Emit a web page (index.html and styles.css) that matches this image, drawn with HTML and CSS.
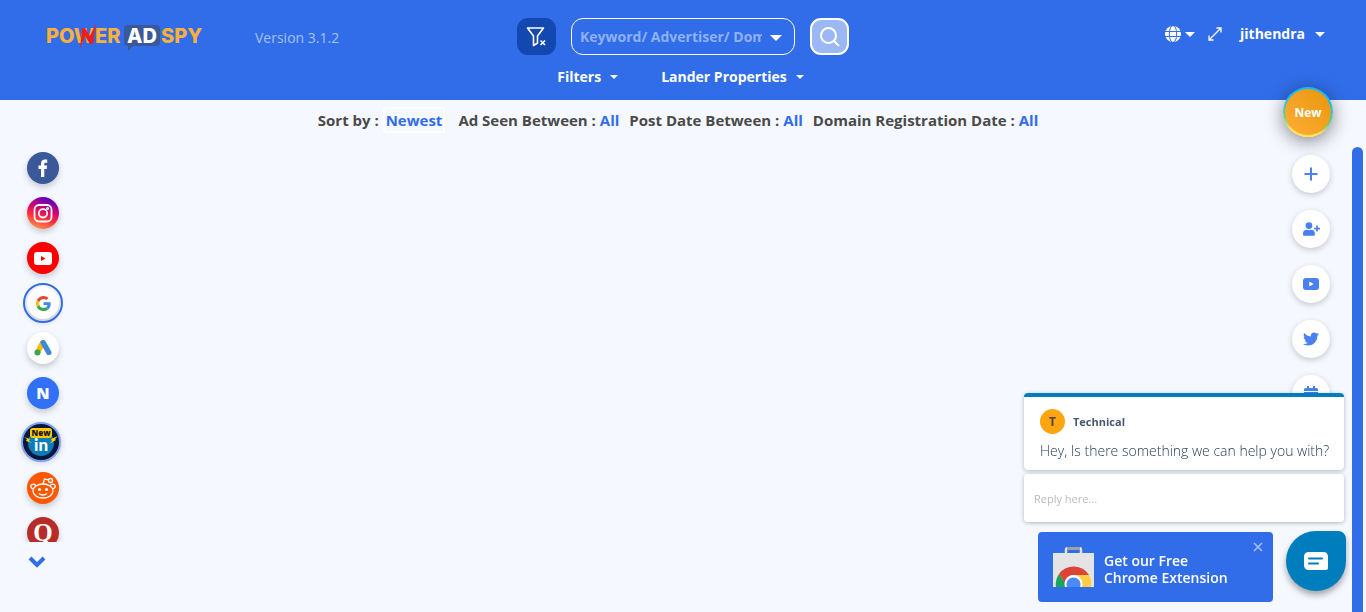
FILE: index.html
```
<!DOCTYPE html>
<html lang="en">
<head>
<meta charset="utf-8">
<title>PowerAdSpy</title>
<meta name="viewport" content="width=device-width, initial-scale=1">
<link rel="stylesheet" href="styles.css">
</head>
<body>
<header class="topbar">
  <div class="brand">
    <a class="logo" href="#" aria-label="PowerAdSpy home">
      <svg width="160" height="30" viewBox="0 0 160 30">
        <path d="M82 2h28a4 4 0 0 1 4 4v13a4 4 0 0 1-4 4H87l-5 5V23a4 4 0 0 1-4-4V6a4 4 0 0 1 4-4z" fill="#3b5998"/>
        <g class="logo-text">
          <text x="0" y="20">POWER</text>
          <text x="81" y="20" class="logo-ad">AD</text><text x="115" y="20">SPY</text>
        </g>
        <path d="M34 26L36 5h3l5 8L50 0l-3 21h-3l-5-8z" fill="#ed1c24"/>
      </svg>
    </a>
    <span class="version">Version 3.1.2</span>
  </div>

  <div class="finder">
    <form class="search-row">
      <button type="button" class="clear-filter" aria-label="Clear filters">
        <svg width="24" height="24" viewBox="0 0 24 24" fill="none" stroke="#fff" stroke-width="1.600" stroke-linejoin="round"><path d="M2.500 3h16l-6 8v7l-4 2.500V11z"/><path d="M15 15.500l5 5M20 15.500l-5 5" stroke="#1348b0" stroke-width="4"/><path d="M15.500 15.500l4.500 4.500M20 15.500l-4.500 4.500"/></svg>
      </button>
      <div class="search-box">
        <input type="text" class="search-input" aria-label="Search" placeholder="Keyword/ Advertiser/ Domain">
        <button type="button" class="caret-button" aria-label="Search options"><span class="caret caret-large"></span></button>
      </div>
      <button type="submit" class="search-button" aria-label="Search">
        <svg width="22" height="22" viewBox="0 0 22 22" fill="none" stroke="#fff" stroke-width="2"><circle cx="9.500" cy="9.500" r="7.500"/><path d="M15 15l5 5"/></svg>
      </button>
    </form>
    <nav class="filter-row">
      <button type="button" class="menu-button">Filters <span class="caret caret-small"></span></button>
      <button type="button" class="menu-button">Lander Properties <span class="caret caret-small"></span></button>
    </nav>
  </div>

  <div class="account">
    <button type="button" class="language" aria-label="Language">
      <svg width="16" height="16" viewBox="0 0 16 16"><circle cx="8" cy="8" r="8" fill="#fff"/><g fill="none" stroke="#316de8"><path d="M0 5.500h16M0 10.500h16"/><ellipse cx="8" cy="8" rx="3.700" ry="8.500"/></g></svg>
      <span class="caret caret-medium"></span>
    </button>
    <button type="button" class="expand" aria-label="Full screen">
      <svg width="14" height="14" viewBox="0 0 14 14" fill="none" stroke="#fff" stroke-width="1.300"><path d="M1 13L13 1M8.500 1H13v4.500M5.500 13H1V8.500"/></svg>
    </button>
    <button type="button" class="user">jithendra <span class="caret caret-medium"></span></button>
  </div>
</header>

<div class="sort-row">
  <span class="sort-item">Sort by : <a class="sort-box" href="#">Newest</a></span>
  <span class="sort-item">Ad Seen Between : <a href="#">All</a></span>
  <span class="sort-item">Post Date Between : <a href="#">All</a></span>
  <span class="sort-item">Domain Registration Date : <a href="#">All</a></span>
</div>

<main class="workspace">
  <nav class="networks" aria-label="Ad networks">
    <div class="network-list">
      <a class="network facebook" href="#" aria-label="Facebook"><svg width="32" height="32" viewBox="0 0 32 32"><path d="M14 25v-8h-2.500v-3.500H14V11.500c0-2.700 1.600-4 4-4h2.200v3.300h-1.600c-1 0-1.300.5-1.300 1.300v1.400h2.800l-.4 3.500h-2.400v8z" fill="#fff"/></svg></a>
      <a class="network instagram" href="#" aria-label="Instagram"><svg width="32" height="32" viewBox="0 0 32 32" fill="none" stroke="#fff" stroke-width="1.800"><rect x="7.500" y="8" width="17" height="16.500" rx="4.500"/><circle cx="16" cy="16.300" r="4.200"/><circle cx="20.600" cy="11.600" r=".6"/></svg></a>
      <a class="network youtube" href="#" aria-label="YouTube"><svg width="32" height="32" viewBox="0 0 32 32"><rect x="7" y="10" width="18" height="13" rx="3" fill="#fff"/><path d="M14 14v5l4.500-2.500z" fill="#f00"/></svg></a>
      <a class="network google" href="#" aria-label="Google"><svg width="15" height="15" viewBox="0 0 48 48"><path fill="#ea4335" d="M24 9.500c3.500 0 6.700 1.200 9.200 3.600l6.900-6.900C35.900 2.400 30.500 0 24 0 14.600 0 6.500 5.400 2.600 13.200l8 6.200C12.400 13.700 17.700 9.500 24 9.500z"/><path fill="#4285f4" d="M47 24.500c0-1.600-.2-3-.4-4.500H24v9h12.900c-.6 3-2.300 5.500-4.800 7.200l7.700 6C44.400 38 47 31.800 47 24.500z"/><path fill="#fbbc05" d="M10.500 28.600a14.500 14.500 0 0 1 0-9.200l-7.900-6.200a24 24 0 0 0 0 21.600z"/><path fill="#34a853" d="M24 48c6.500 0 11.900-2.100 15.900-5.800l-7.700-6c-2.200 1.500-4.900 2.300-8.200 2.300-6.300 0-11.600-4.200-13.500-9.900l-8 6.200C6.500 42.600 14.600 48 24 48z"/></svg></a>
      <a class="network ads" href="#" aria-label="Google Ads"><svg width="32" height="32" viewBox="0 0 32 32" stroke-linecap="round" stroke-width="5.400"><path d="M15.500 11l-5 9.500" stroke="#fbbc04"/><path d="M16.200 10.500l5.600 10" stroke="#4088d8"/><circle cx="10.500" cy="20.500" r="3" fill="#34a853"/></svg></a>
      <a class="network native" href="#" aria-label="Native">N</a>
      <a class="network linkedin" href="#" aria-label="LinkedIn, new">
        <svg width="40" height="40" viewBox="0 0 40 40"><circle cx="20" cy="20" r="19" fill="#07183c" stroke="#7ea1ea" stroke-width="2"/><circle cx="20" cy="21" r="13" fill="#0a7cba"/><path d="M3 15l6 2-1 2 3 2-6-2 1-2zM37 14l-7 3 1 2-3 3 7-4-1-1z" fill="#ffd400"/><rect x="9" y="6" width="22" height="10" rx="3" fill="#ffc800"/><text x="20" y="14" class="badge-text">New</text><text x="20" y="29" class="in-text">in</text></svg>
      </a>
      <a class="network reddit" href="#" aria-label="Reddit"><svg width="32" height="32" viewBox="0 0 32 32" fill="none" stroke="#fff" stroke-width="1.300"><ellipse cx="16" cy="19" rx="10" ry="7"/><path d="M6 17c-2.500-1-2.800-3.500-1.500-4.200 1.500-1 3.500-.5 4.500 1M26 17c2.500-1 2.800-3.500 1.500-4.200-1.500-1-3.500-.5-4.500 1M16 12l1.500-5 4 .8M12 21.500c2 2 6 2 8 0"/><circle cx="23.500" cy="8.500" r="2"/><circle cx="12.500" cy="17.500" r="1.600" fill="#fff" stroke="none"/><circle cx="19.500" cy="17.500" r="1.600" fill="#fff" stroke="none"/></svg></a>
      <a class="network quora" href="#" aria-label="Quora">Q</a>
    </div>
    <button type="button" class="more" aria-label="More networks"><svg width="18" height="12" viewBox="0 0 18 12" fill="none" stroke="#316de8" stroke-width="4"><path d="M2 2l7 7 7-7"/></svg></button>
  </nav>
  <div class="scroll-thumb"></div>
</main>

<aside class="actions">
  <a class="action-new" href="#"><span>New</span></a>
  <a class="action" href="#" aria-label="Add"><svg width="16" height="16" viewBox="0 0 16 16" stroke="#4a80f0" stroke-width="2"><path d="M8 1.500v13M1.500 8h13"/></svg></a>
  <a class="action" href="#" aria-label="Invite"><svg width="17" height="14" viewBox="0 0 640 512" fill="#4a80f0"><path d="M624 208h-64v-64c0-9-7-16-16-16h-32c-9 0-16 7-16 16v64h-64c-9 0-16 7-16 16v32c0 9 7 16 16 16h64v64c0 9 7 16 16 16h32c9 0 16-7 16-16v-64h64c9 0 16-7 16-16v-32c0-9-7-16-16-16zM224 256a128 128 0 1 0 0-256 128 128 0 0 0 0 256zm90 32h-17a174 174 0 0 1-146 0h-17C60 288 0 348 0 422v42c0 27 21 48 48 48h352c27 0 48-21 48-48v-42c0-74-60-134-134-134z"/></svg></a>
  <a class="action" href="#" aria-label="YouTube channel"><svg width="16" height="12" viewBox="0 0 16 12"><rect width="16" height="12" rx="3" fill="#4a80f0"/><path d="M6.300 3.500v5l4.400-2.500z" fill="#fff"/></svg></a>
  <a class="action" href="#" aria-label="Twitter"><svg width="16" height="16" viewBox="0 0 512 512" fill="#4a80f0"><path d="M459 152c0 4 0 9 0 14 0 138-105 298-298 298-59 0-114-17-161-47 8 1 16 1 25 1 49 0 94-16 130-45-46-1-85-31-98-73 7 1 13 2 20 2 9 0 19-1 28-4-48-10-84-52-84-103v-1c14 8 30 13 47 13-28-19-47-51-47-87 0-19 5-37 14-53 52 64 129 105 216 110-2-8-3-16-3-24 0-58 47-105 105-105 30 0 58 13 77 33 24-5 46-13 67-25-8 24-24 45-46 58 21-2 42-8 61-16-14 21-32 39-53 54z"/></svg></a>
  <a class="action" href="#" aria-label="Calendar"><svg width="14" height="16" viewBox="0 0 14 16" fill="#4a80f0"><path d="M3 0h2v2h4V0h2v2h1.500A1.500 1.500 0 0 1 14 3.500V5H0V3.500A1.500 1.500 0 0 1 1.500 2H3zM0 6h14v8.500a1.500 1.500 0 0 1-1.500 1.500h-11A1.500 1.500 0 0 1 0 14.500z"/></svg></a>
</aside>

<section class="chat" aria-label="Support chat">
  <div class="message">
    <div class="agent"><span class="avatar">T</span><strong>Technical</strong></div>
    <p class="message-text">Hey, Is there something we can help you with?</p>
  </div>
  <input class="reply" type="text" aria-label="Reply" placeholder="Reply here...">
  <div class="chat-footer">
    <div class="promo">
      <svg width="41" height="40" viewBox="0 0 41 40"><path d="M13 7V3q0-2 2-2h11q2 0 2 2v4" fill="none" stroke="#e3e4e5" stroke-width="2.500"/><path d="M14 0h13v3H14z" fill="#9ea3a8"/><path d="M0 6h41v34H0z" fill="#e4e4e4"/><path d="M3 40a18 18 0 0 1 3-13l9 13z" fill="#1aa260"/><path d="M6 27a18 18 0 0 1 30 1H21a9 9 0 0 0-9 8z" fill="#db4437"/><path d="M36 28H23q7 4 5 12h10q1-7-2-12z" fill="#ffce44"/><path d="M12 40a9 9 0 1 1 17 0z" fill="#fff"/><path d="M14 40a7 7 0 1 1 13 0z" fill="#4b8bf5"/></svg>
      <a class="promo-text" href="#">Get our Free<br>Chrome Extension</a>
      <button type="button" class="close" aria-label="Close"><svg width="10" height="10" viewBox="0 0 10 10" stroke="#a5c0f6" stroke-width="1.600"><path d="M1 1l8 8M9 1L1 9"/></svg></button>
    </div>
    <button type="button" class="chat-button" aria-label="Open chat"><svg width="24" height="18" viewBox="0 0 24 18"><path d="M5 0h14q5 0 5 5v11q0 2-2 2H5q-5 0-5-5V5q0-5 5-5z" fill="#fff"/><path d="M5 6.500h13M5 11.500h9" stroke="#007dbc" stroke-width="2" stroke-linecap="round"/></svg></button>
  </div>
</section>
</body>
</html>
```

FILE: styles.css
```
* { box-sizing: border-box; }
body {
  margin: 0;
  min-height: 100vh;
  display: flex;
  flex-direction: column;
  background: #f5f8ff;
  color: #4a4a4a;
  font-family: "Open Sans", "Noto Sans", sans-serif;
  overflow: hidden;
}
button { padding: 0; border: 0; background: none; color: inherit; font: inherit; cursor: pointer; }
a { color: #316de8; text-decoration: none; }
svg { display: block; }

.topbar {
  display: grid;
  grid-template-columns: 1fr auto 1fr;
  min-height: 100px;
  padding: 18px 40px 12px;
  background: #316de8;
  color: #fff;
}
.brand { display: flex; align-items: flex-start; gap: 49px; padding: 5px 0 0 6px; }
.logo-text { font: 800 20px Inter, sans-serif; fill: #fbb03b; }
.logo-ad { fill: #fff; }
.version { padding-top: 5px; font-size: 14px; line-height: 20px; color: #a6c2fa; }

.finder { display: flex; flex-direction: column; align-items: center; gap: 12px; }
.search-row { display: flex; gap: 15px; }
.clear-filter, .search-button { display: grid; place-items: center; width: 39px; height: 37px; border-radius: 11px; }
.clear-filter { background: #1348b0; }
.search-button { background: #9cb8f4; border: 2px solid #fff; }
.search-box { display: flex; align-items: center; width: 224px; height: 37px; padding: 0 12px 0 8px; border: 1px solid #fff; border-radius: 12px; }
.search-input { flex: 1; min-width: 0; padding: 0; border: 0; outline: 0; background: none; color: #fff; font: 700 14px "Open Sans", sans-serif; }
.search-input::placeholder { color: #8fb1f7; opacity: 1; }
.caret-button { padding-left: 8px; }
.caret { display: inline-block; border-style: solid; border-color: #fff transparent transparent; vertical-align: middle; }
.caret-large { border-width: 6px 6px 0; }
.caret-medium { border-width: 5px 5px 0; }
.caret-small { border-width: 4px 4px 0; }
.filter-row { display: flex; gap: 43px; padding-right: 5px; }
.menu-button { display: flex; align-items: center; gap: 9px; font-size: 14px; font-weight: 700; line-height: 20px; }

.account { display: flex; justify-content: flex-end; align-items: flex-start; padding: 6px 1px 0 0; }
.language { display: flex; align-items: center; gap: 4px; height: 20px; margin-right: 13px; }
.expand { height: 20px; margin-right: 18px; }
.user { display: flex; align-items: center; gap: 10px; font-size: 14px; font-weight: 700; line-height: 20px; }

.sort-row { display: flex; justify-content: center; gap: 10px; padding: 7px 10px 13px 0; font-size: 15px; font-weight: 700; line-height: 26px; }
.sort-box { display: inline-block; margin-right: 3px; padding: 0 1px; line-height: 22px; border: 2px solid #fff; }

.workspace { flex: 1; display: flex; justify-content: space-between; padding: 0 3px 0 0; }
.networks { width: 86px; padding-top: 6px; }
.network-list { display: flex; flex-direction: column; align-items: center; gap: 13px; height: 390px; overflow: hidden; }
.network { flex: none; display: grid; place-items: center; width: 32px; height: 32px; border-radius: 50%; box-shadow: 0 3px 6px #0003; color: #fff; }
.facebook { background: #3b5998; }
.instagram { background: linear-gradient(200deg, #5b00c8 12%, #d3066c 42%, #ff2c3c 62%, #fcb050); }
.youtube { background: #f00; }
.google { background: #fff; outline: 2px solid #316de8; outline-offset: 2px; }
.ads { background: #fff; }
.native { background: #3071f8; font-size: 16px; font-weight: 800; }
.linkedin { width: 40px; height: 37px; margin-right: 4px; }
.badge-text { font: 800 8px "Open Sans", sans-serif; text-anchor: middle; fill: #161616; }
.in-text { font: 900 17px Lato, sans-serif; text-anchor: middle; fill: #fff; }
.reddit { background: #ff5700; }
.quora { background: #b92b27; font: 700 25px "Liberation Serif", serif; }
.more { margin: 14px 0 0 28px; }
.scroll-thumb { width: 11px; margin-top: 1px; border-radius: 6px 6px 0 0; background: #316de8; }

.actions { position: fixed; top: 87px; right: 33px; display: flex; flex-direction: column; align-items: flex-end; gap: 17px; padding-right: 3px; }
.action-new { display: grid; width: 50px; height: 50px; margin: 0 -3px 1px 0; padding: 2px; border-radius: 50%; background: linear-gradient(190deg, #16bdf2 30%, #6bcf83 65%, #ffe34d 85%); box-shadow: 0 4px 18px #0007; color: #fff; font-size: 12px; font-weight: 700; }
.action-new span { display: grid; place-items: center; border-radius: 50%; background: linear-gradient(45deg, #ffae38, #e8960c); }
.action { display: grid; place-items: center; width: 38px; height: 38px; border-radius: 50%; background: #fff; box-shadow: 0 2px 6px #0003; }

.chat { position: fixed; right: 20px; bottom: 10px; width: 322px; }
.message, .reply { display: block; width: 320px; border-radius: 4px; background: #fff; box-shadow: 0 1px 4px #0004; }
.message { padding: 12px 16px 9px; border-top: 4px solid #007dbc; }
.agent { display: flex; align-items: center; gap: 8px; font-size: 11px; color: #475872; }
.avatar { display: grid; place-items: center; width: 25px; height: 25px; border-radius: 50%; background: #ffa50f; color: #444; font-size: 12px; font-weight: 700; }
.message-text { margin: 7px 0 0; font: 300 14px/20px "Open Sans", sans-serif; color: #283e59; white-space: nowrap; }
.reply { height: 48px; margin-top: 4px; padding: 0 10px; border: 0; font: 11px "Open Sans", sans-serif; }
.reply::placeholder { color: #bbb; opacity: 1; }
.chat-footer { display: flex; justify-content: flex-end; gap: 13px; margin-top: 9px; }
.promo { display: flex; align-items: center; width: 235px; height: 70px; margin-top: 1px; padding: 0 10px 0 15px; border-radius: 4px; background: #316de8; }
.promo-text { flex: 1; margin: 4px 0 0 10px; color: #fff; font-size: 14px; font-weight: 600; line-height: 17px; }
.close { align-self: flex-start; padding-top: 10px; }
.chat-button { display: grid; place-items: center; width: 60px; height: 60px; border-radius: 50% 8px 50% 50%; background: #007dbc; box-shadow: 0 4px 6px #0005; }
```
